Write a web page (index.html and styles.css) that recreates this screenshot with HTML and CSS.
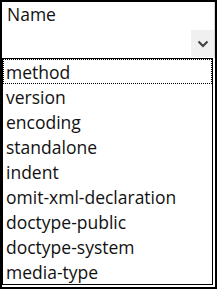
FILE: index.html
```html
<!DOCTYPE html>
<html lang="en">
<head>
    <meta charset="UTF-8">
    <meta name="viewport" content="width=device-width, initial-scale=1.0">
    <title>Name</title>
    <link rel="stylesheet" href="styles.css">
</head>
<body>
    <div class="frame">
        <div class="header">
            <div class="label">Name</div>
            <div class="drop-button">
                <svg width="12" height="8" viewBox="0 0 12 8">
                    <polyline points="1.5,1.5 6,6 10.5,1.5" fill="none" stroke="#404040" stroke-width="2"/>
                </svg>
            </div>
        </div>
        <ul class="options">
            <li class="option focused">method</li>
            <li class="option">version</li>
            <li class="option">encoding</li>
            <li class="option">standalone</li>
            <li class="option">indent</li>
            <li class="option">omit-xml-declaration</li>
            <li class="option">doctype-public</li>
            <li class="option">doctype-system</li>
            <li class="option">media-type</li>
        </ul>
    </div>
</body>
</html>
```

FILE: styles.css
```css
body {
    margin: 0;
    padding: 0;
    font-family: "Open Sans", "Noto Sans", sans-serif;
    background-color: white;
}
.frame {
    width: 217px;
    height: 289px;
    box-sizing: border-box;
    border: 2px solid #000;
    background-color: white;
}
.header {
    height: 56px;
    box-sizing: border-box;
    border-right: 1px solid #d8d8d8;
    display: flex;
    justify-content: space-between;
    align-items: flex-start;
    padding-left: 5px;
}
.label {
    font-size: 17.5px;
    line-height: 24px;
    color: #111;
    margin-top: 0;
}
.drop-button {
    width: 23px;
    height: 27px;
    margin-top: 28px;
    background-color: #f0f0f0;
    display: flex;
    justify-content: center;
    align-items: center;
}
.options {
    list-style: none;
    margin: 0;
    padding: 0;
    width: 211px;
    height: 227px;
    box-sizing: border-box;
    border: 1px solid #000;
}
.option {
    height: 25px;
    box-sizing: border-box;
    padding-left: 3px;
    font-size: 17.5px;
    line-height: 26px;
    color: #111;
    white-space: nowrap;
}
.focused {
    border: 1px dotted #000;
    padding-left: 2px;
    line-height: 24px;
}
```
